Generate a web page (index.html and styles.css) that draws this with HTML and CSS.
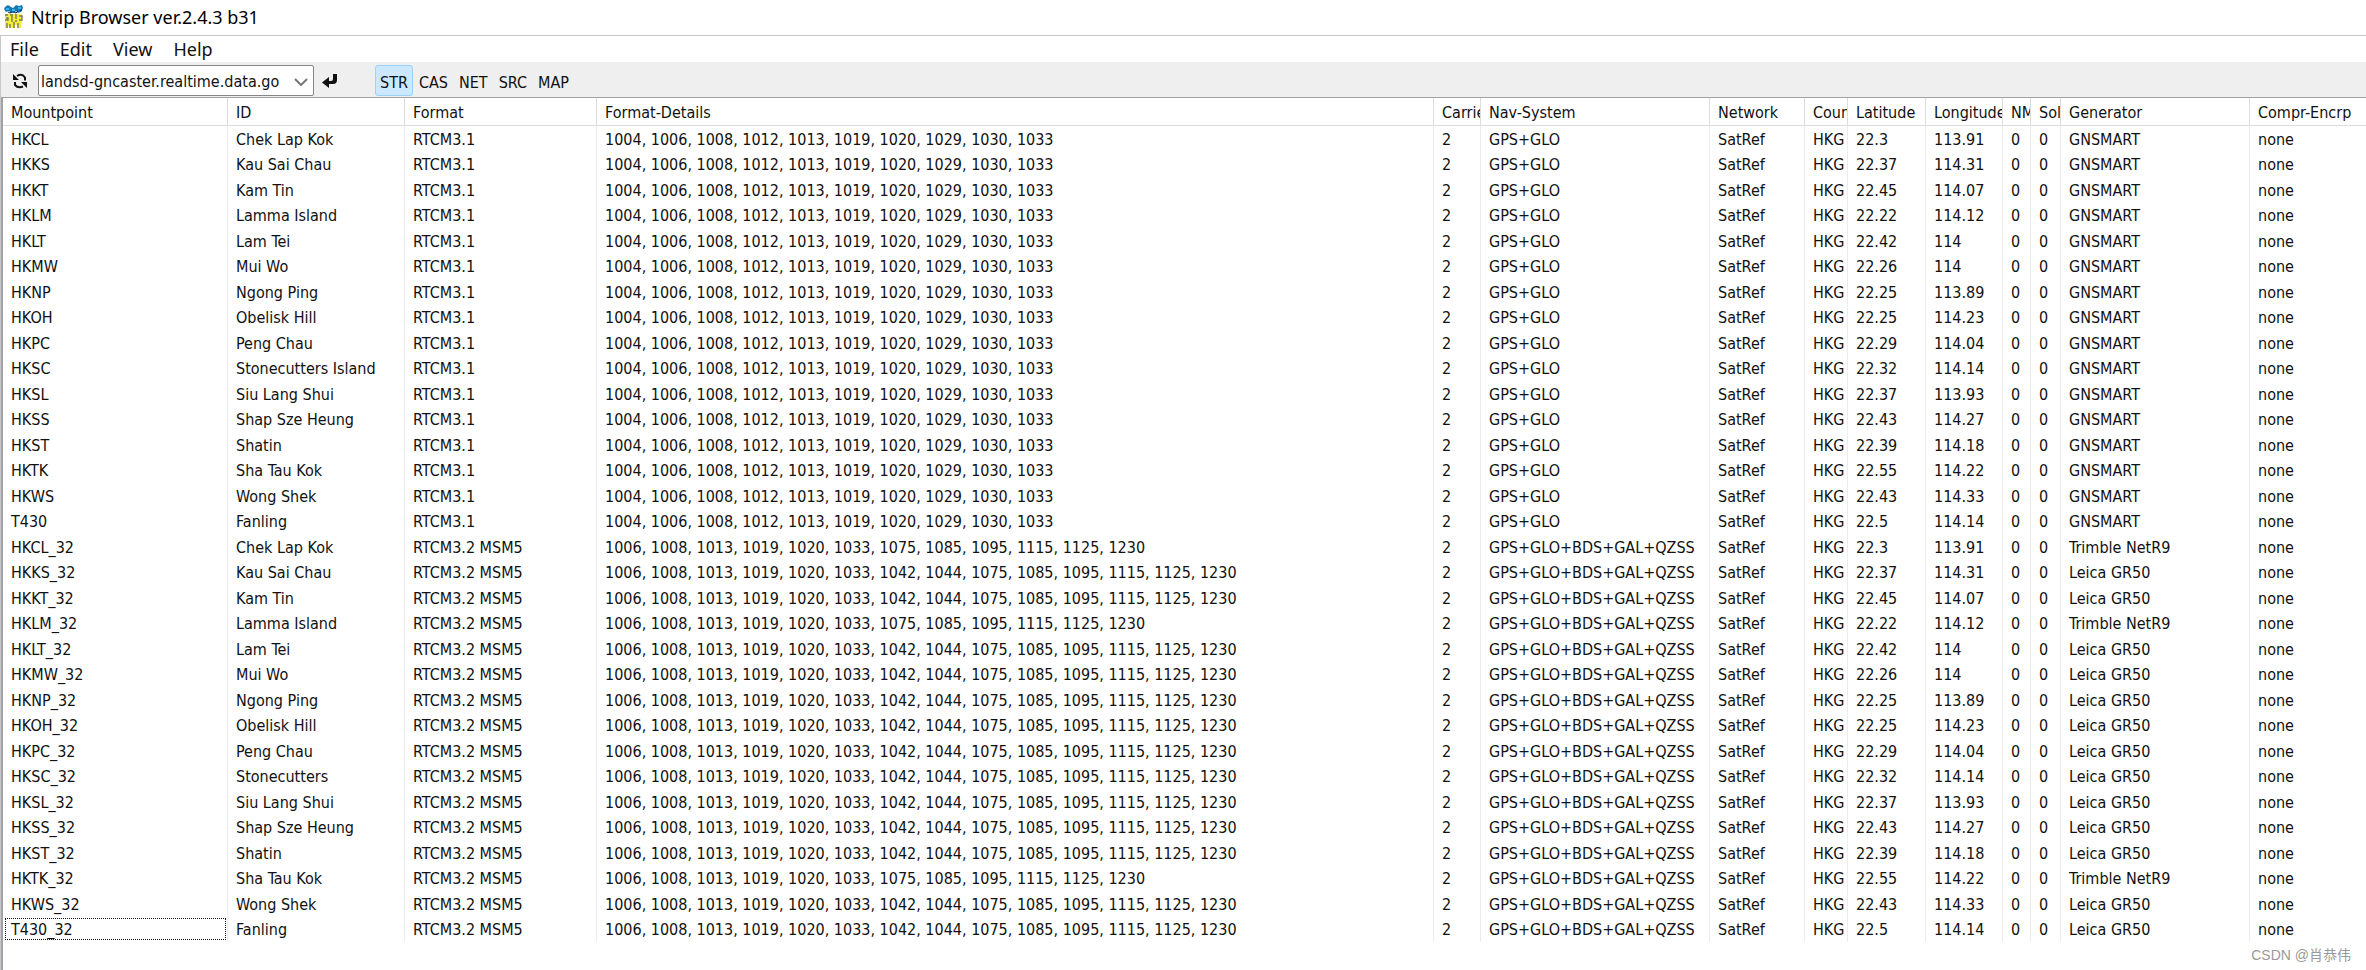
FILE: index.html
```html
<!DOCTYPE html>
<html lang="en">
<head>
  <meta charset="UTF-8">
  <title>Ntrip Browser ver.2.4.3 b31</title>
  <meta name="viewport" content="width=device-width, initial-scale=1.0">
  <link rel="stylesheet" href="styles.css">
</head>
<body>

  <header class="titlebar">
    <svg class="app-icon" width="20" height="26" viewBox="0 0 20 26" aria-hidden="true">
      <path d="M1 3l3-2 3 2 2 1 3-3 3 1 3-1 1 3-2 4-3 1-2-2-2 2-3 0-2-2-3 1-2-3z" fill="#1478b4"/>
      <path d="M2 4h3v2H2zM8 5h3v2H8zM14 3h3v2h-3z" fill="#35b5ee"/>
      <path d="M4 8l2 1 2-1M10 8l2 1 2-2M16 7l2-1" stroke="#123" fill="none"/>
      <path d="M1 10h17v14H1z" fill="#f4ee35"/>
      <path d="M1 11h3M2 14h2v2H1M6 11h3M8 12v6M12 10v5M11 17h2M15 12h3v4h-3M3 19v5M6 20v4M10 18v6M14 19v5" stroke="#777b62" stroke-width="1.4" fill="none"/>
      <path d="M4 22h1v3H4zM11 21h2v4h-2zM17 19h2v5h-2z" fill="#fff"/>
    </svg>
    <h1>Ntrip Browser ver.2.4.3 b31</h1>
  </header>

  <div class="window">
    <nav class="menubar">
      <button type="button">File</button>
      <button type="button">Edit</button>
      <button type="button">View</button>
      <button type="button">Help</button>
    </nav>

    <div class="toolbar">
      <button type="button" class="icon-btn" aria-label="Reload">
        <svg width="16" height="16" viewBox="0 0 16 16" fill="none" stroke="#111" stroke-width="2">
          <path d="M5 3q5-3 8 1.500v3M11 13.500q-5 2-8-1.500V9"/>
          <path d="M1 1v6h6zM15 15V9H9z" fill="#111" stroke="none"/>
        </svg>
      </button>
      <div class="caster">
        <select id="caster" aria-label="Caster">
          <option>landsd-gncaster.realtime.data.go</option>
        </select>
        <svg class="chevron" width="14" height="8" viewBox="0 0 14 8" fill="none" stroke="#777" stroke-width="2"><path d="M1 1l6 6 6-6"/></svg>
      </div>
      <button type="button" class="icon-btn" aria-label="Connect">
        <svg width="16" height="16" viewBox="0 0 16 16">
          <path d="M11 1h4v6q0 4-4 4H7v4L0 9.500 7 4v4h2q2 0 2-2z" fill="#111"/>
        </svg>
      </button>
      <div class="tabs">
        <button type="button" class="active">STR</button>
        <button type="button">CAS</button>
        <button type="button">NET</button>
        <button type="button">SRC</button>
        <button type="button">MAP</button>
      </div>
    </div>

    <main class="list">
      <table>
        <colgroup>
          <col class="c-mount"><col class="c-id"><col class="c-format"><col class="c-details">
          <col class="c-carrier"><col class="c-nav"><col class="c-network"><col class="c-country">
          <col class="c-lat"><col class="c-lon"><col class="c-nmea"><col class="c-sol">
          <col class="c-gen"><col>
        </colgroup>
        <thead>
          <tr>
            <th>Mountpoint</th><th>ID</th><th>Format</th><th>Format-Details</th>
            <th>Carrier</th><th>Nav-System</th><th>Network</th><th>Country</th>
            <th>Latitude</th><th>Longitude</th><th>NMEA</th><th>Solution</th>
            <th>Generator</th><th>Compr-Encrp</th>
          </tr>
        </thead>
        <tbody id="mountpoints"></tbody>
      </table>
    </main>
  </div>

  <div class="watermark">CSDN @肖恭伟</div>

  <script>
    // mountpoint, id, latitude, longitude
    const stations = [
      ["HKCL", "Chek Lap Kok", "22.3", "113.91"],
      ["HKKS", "Kau Sai Chau", "22.37", "114.31"],
      ["HKKT", "Kam Tin", "22.45", "114.07"],
      ["HKLM", "Lamma Island", "22.22", "114.12"],
      ["HKLT", "Lam Tei", "22.42", "114"],
      ["HKMW", "Mui Wo", "22.26", "114"],
      ["HKNP", "Ngong Ping", "22.25", "113.89"],
      ["HKOH", "Obelisk Hill", "22.25", "114.23"],
      ["HKPC", "Peng Chau", "22.29", "114.04"],
      ["HKSC", "Stonecutters Island", "22.32", "114.14"],
      ["HKSL", "Siu Lang Shui", "22.37", "113.93"],
      ["HKSS", "Shap Sze Heung", "22.43", "114.27"],
      ["HKST", "Shatin", "22.39", "114.18"],
      ["HKTK", "Sha Tau Kok", "22.55", "114.22"],
      ["HKWS", "Wong Shek", "22.43", "114.33"],
      ["T430", "Fanling", "22.5", "114.14"]
    ];

    const rtcm31 = "1004, 1006, 1008, 1012, 1013, 1019, 1020, 1029, 1030, 1033";
    const trimble = "1006, 1008, 1013, 1019, 1020, 1033, 1075, 1085, 1095, 1115, 1125, 1230";
    const leica = "1006, 1008, 1013, 1019, 1020, 1033, 1042, 1044, 1075, 1085, 1095, 1115, 1125, 1230";
    const trimbleStations = ["HKCL", "HKLM", "HKTK"];

    const rows = [];

    stations.forEach(([name, id, lat, lon]) => {
      rows.push([name, id, "RTCM3.1", rtcm31, "2", "GPS+GLO", "SatRef", "HKG", lat, lon, "0", "0", "GNSMART", "none"]);
    });

    stations.forEach(([name, id, lat, lon]) => {
      const isTrimble = trimbleStations.includes(name);
      rows.push([
        name + "_32",
        name === "HKSC" ? "Stonecutters" : id,
        "RTCM3.2 MSM5",
        isTrimble ? trimble : leica,
        "2", "GPS+GLO+BDS+GAL+QZSS", "SatRef", "HKG", lat, lon, "0", "0",
        isTrimble ? "Trimble NetR9" : "Leica GR50",
        "none"
      ]);
    });

    const tbody = document.getElementById("mountpoints");

    rows.forEach(cells => {
      const tr = document.createElement("tr");
      tr.innerHTML = cells.map(c => `<td>${c}</td>`).join("");
      tbody.appendChild(tr);
    });

    tbody.lastElementChild.className = "focused";
  </script>

</body>
</html>
```
FILE: styles.css
```css
* {
  box-sizing: border-box;
}

body {
  margin: 0;
  min-height: 100vh;
  display: flex;
  flex-direction: column;
  background: #fff;
  color: #111;
  font-family: "DejaVu Sans Condensed", "DejaVu Sans", sans-serif;
  font-size: 16px;
}

button,
select {
  font: inherit;
  color: inherit;
  border: none;
  background: none;
  padding: 0;
}

svg {
  display: block;
}

.titlebar {
  display: flex;
  align-items: center;
  gap: 7px;
  height: 35px;
  padding: 0 0 2px 4px;
}

.titlebar h1 {
  margin: 0;
  font-family: "Noto Sans", sans-serif;
  font-size: 18px;
  font-weight: 400;
  color: #000;
}

.window {
  flex: 1;
  display: flex;
  flex-direction: column;
  border-top: 1px solid #c8c8c8;
  border-left: 1px solid #c8c8c8;
}

.menubar {
  display: flex;
  gap: 21px;
  height: 26px;
  padding-left: 9px;
  font-family: "Noto Sans", sans-serif;
  font-size: 18px;
}

.toolbar {
  display: flex;
  align-items: center;
  height: 35px;
  padding: 2px 0 0 11px;
  background: #efefef;
}

.caster {
  position: relative;
  margin: 0 8px 0 10px;
}

.caster select {
  appearance: none;
  width: 276px;
  height: 31px;
  padding: 2px 0 0 2px;
  border: 1px solid #868686;
  border-radius: 2px;
  background: #fff;
}

.chevron {
  position: absolute;
  right: 6px;
  top: 13px;
  pointer-events: none;
}

.tabs {
  display: flex;
  gap: 1px;
  margin-left: 37px;
}

.tabs button {
  height: 31px;
  padding: 4px 4px 0;
  border: 1px solid transparent;
  border-radius: 3px;
}

.tabs .active {
  background: #cce8ff;
  border-color: #99d1ff;
}

.list {
  flex: 1;
  border-top: 1px solid #a0a0a5;
  border-left: 2px solid #a0a0a5;
}

table {
  width: 100%;
  table-layout: fixed;
  border-collapse: separate;
  border-spacing: 0;
}

.c-mount { width: 225px; }
.c-id { width: 177px; }
.c-format { width: 192px; }
.c-details { width: 837px; }
.c-carrier { width: 47px; }
.c-nav { width: 229px; }
.c-network { width: 95px; }
.c-country { width: 43px; }
.c-lat { width: 78px; }
.c-lon { width: 77px; }
.c-nmea { width: 28px; }
.c-sol { width: 30px; }
.c-gen { width: 189px; }

th,
td {
  height: 25px;
  padding: 2px 0 0 8px;
  border-right: 1px solid #ececec;
  line-height: 22px;
  text-align: left;
  font-weight: 400;
  white-space: nowrap;
  overflow: hidden;
}

th {
  height: 28px;
  padding-top: 3px;
  border-right-color: #dcdcdc;
  border-bottom: 1px solid #dcdcdc;
}

tr:nth-child(even) td {
  height: 26px;
}

th:last-child,
td:last-child {
  border-right: none;
}

.focused td:first-child {
  outline: 1px dotted #111;
  outline-offset: -3px;
}

.watermark {
  position: absolute;
  right: 15px;
  bottom: 6px;
  font-family: "Liberation Sans", "Noto Sans CJK SC", sans-serif;
  font-size: 14px;
  color: #999;
}
```
